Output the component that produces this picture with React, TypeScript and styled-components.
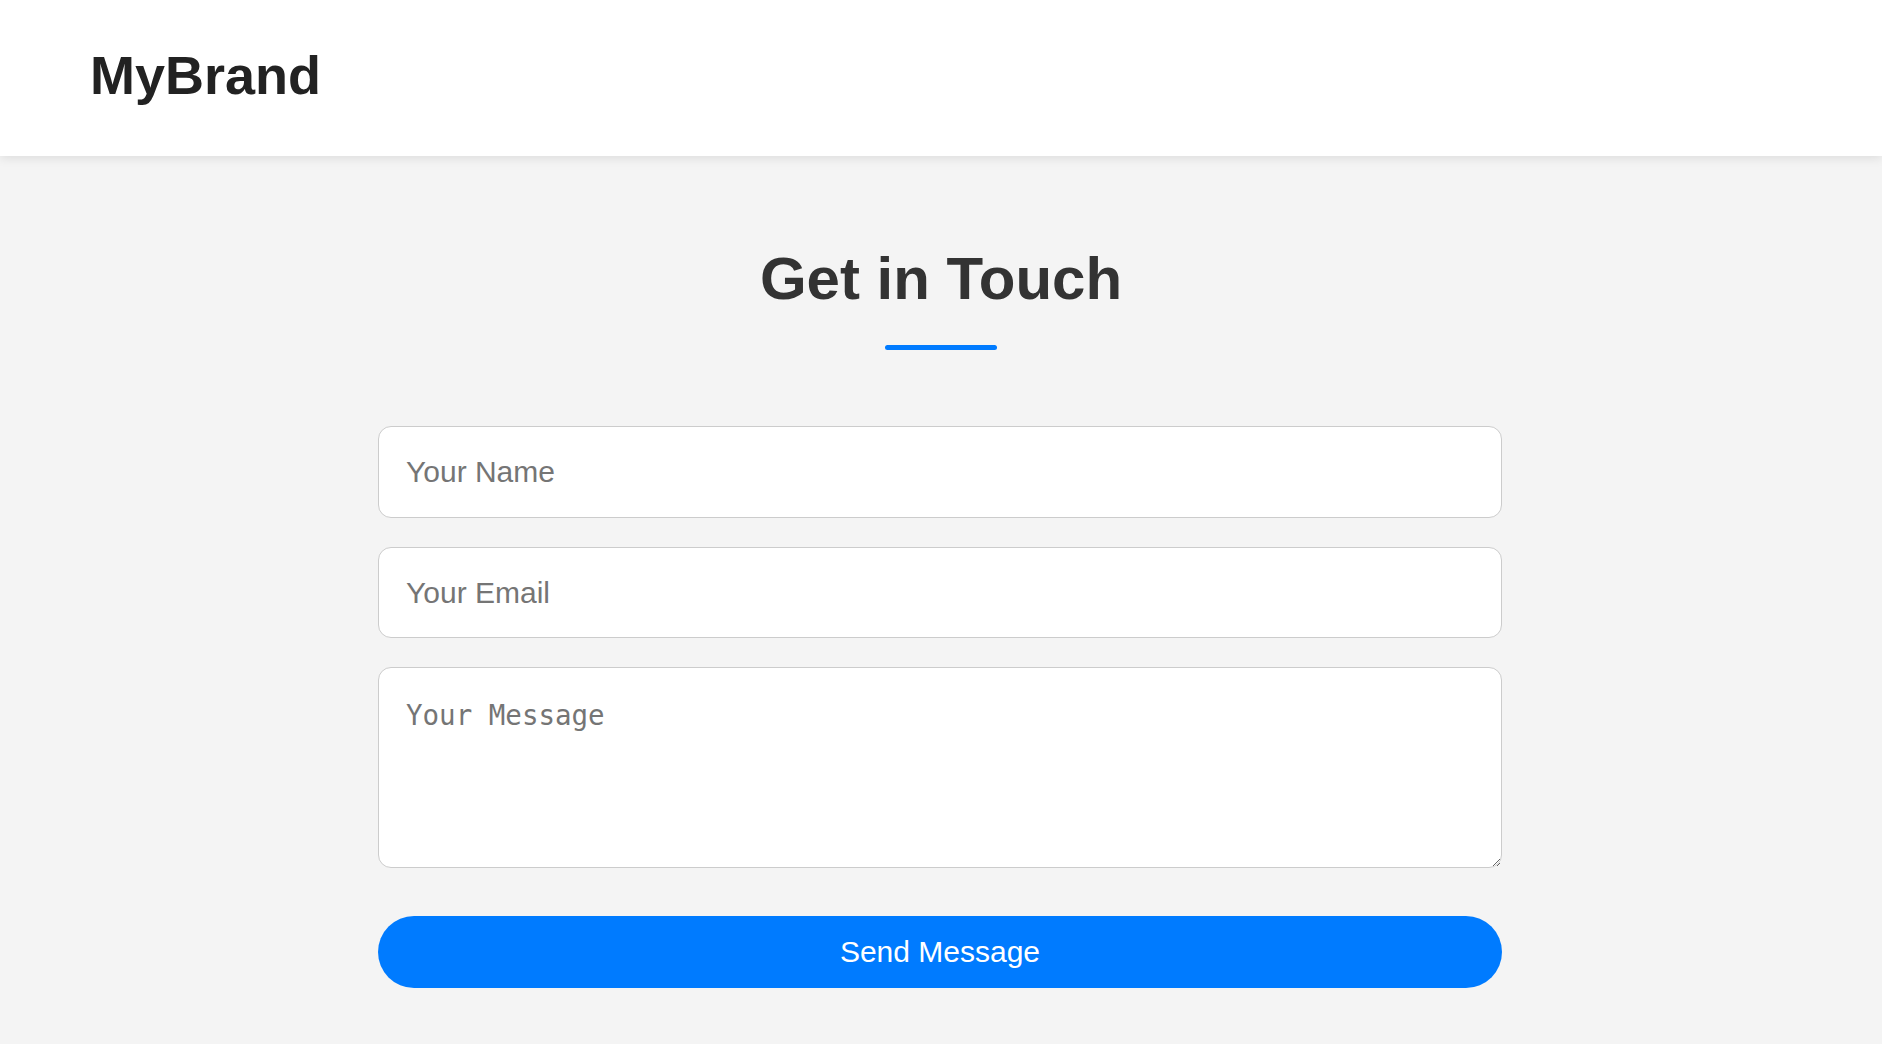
import React from "react";
import styled, { createGlobalStyle } from "styled-components";

const GlobalStyle = createGlobalStyle`
  html, body {
    margin: 0;
    padding: 0;
    background: #f4f4f4;
    font-family: "Liberation Sans", Arial, sans-serif;
  }
  * { box-sizing: border-box; }
`;

const Header = styled.header`
  height: 156px;
  background: #ffffff;
  box-shadow: 0 2px 10px rgba(0, 0, 0, 0.1);
  display: flex;
  align-items: center;
  padding: 0 90px;
  position: relative;
  z-index: 1;
`;

const Brand = styled.div`
  font-size: 54px;
  font-weight: 700;
  color: #222222;
  line-height: 1;
  margin-bottom: 6px;
`;

const Main = styled.main`
  display: flex;
  flex-direction: column;
  align-items: center;
  padding: 88px 0 60px;
`;

const Title = styled.h2`
  margin: 0;
  font-size: 60px;
  font-weight: 700;
  color: #333333;
  line-height: 69px;
  text-align: center;
`;

const Underline = styled.div`
  width: 112px;
  height: 5px;
  border-radius: 3px;
  background: #007bff;
  margin-top: 32px;
`;

const Form = styled.form`
  width: 1124px;
  margin-top: 76px;
  margin-right: 2px;
  display: flex;
  flex-direction: column;
  gap: 29px;
`;

const Field = styled.input<{ $h?: number }>`
  display: block;
  width: 100%;
  height: ${(p) => p.$h ?? 92}px;
  padding: 0 27px;
  border: 1px solid #cccccc;
  border-radius: 13px;
  background: #ffffff;
  font-family: "Liberation Sans", Arial, sans-serif;
  font-size: 30px;
  color: #333;
  outline: none;
  &::placeholder { color: #757575; }
`;

const Message = styled.textarea`
  display: block;
  width: 100%;
  height: 201px;
  padding: 31px 27px 27px;
  border: 1px solid #cccccc;
  border-radius: 13px;
  background: #ffffff;
  font-family: "DejaVu Sans Mono", monospace;
  font-size: 27.5px;
  color: #333;
  outline: none;
  resize: vertical;
  &::placeholder { color: #757575; }
`;

const SendButton = styled.button`
  display: block;
  width: 100%;
  height: 72px;
  margin-top: 19px;
  border: none;
  border-radius: 36px;
  background: #007bff;
  color: #ffffff;
  font-family: "Liberation Sans", Arial, sans-serif;
  font-size: 30px;
  cursor: pointer;
`;

export default function App() {
  return (
    <>
      <GlobalStyle />
      <Header>
        <Brand>MyBrand</Brand>
      </Header>
      <Main>
        <Title>Get in Touch</Title>
        <Underline />
        <Form onSubmit={(e) => e.preventDefault()}>
          <Field type="text" placeholder="Your Name" $h={92} />
          <Field type="email" placeholder="Your Email" $h={91} />
          <Message placeholder="Your Message" />
          <SendButton type="submit">Send Message</SendButton>
        </Form>
      </Main>
    </>
  );
}
